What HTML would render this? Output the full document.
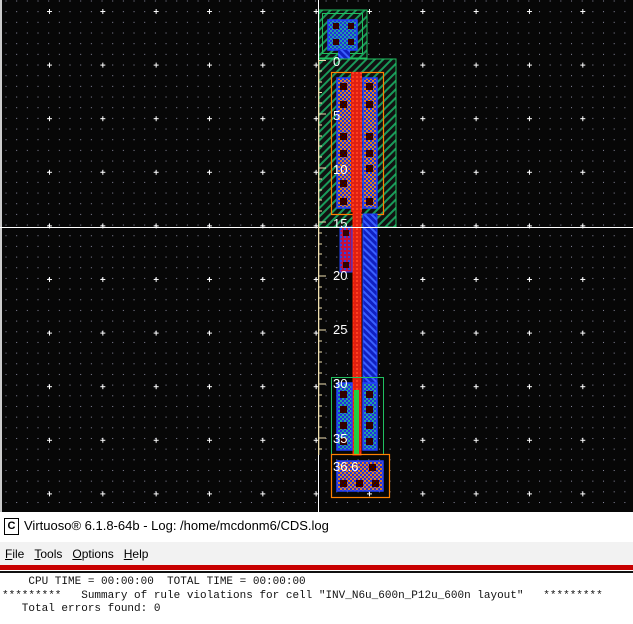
<!DOCTYPE html>
<html><head><style>
body{margin:0;width:633px;height:624px;overflow:hidden;background:#fff;font-family:"Liberation Sans",sans-serif}
#t{position:absolute;left:0;top:512px;width:633px;height:30px;background:#fff;font-size:13px}
#m{position:absolute;left:0;top:542px;width:633px;height:24px;background:#f2f2f2;font-size:12px}
#r{position:absolute;left:0;top:565px;width:633px;height:5px;background:#c80000}
#k{position:absolute;left:0;top:571px;width:633px;height:2px;background:#111}
#log{position:absolute;left:2px;top:576px;font-family:"Liberation Mono",monospace;font-size:11px;line-height:13.5px;white-space:pre;color:#111}
</style></head><body>
<svg width="633" height="512" style="position:absolute;left:0;top:0" xmlns="http://www.w3.org/2000/svg">
<defs>
<pattern id="dots" x="5.5" y="0.5" width="10.67" height="10.67" patternUnits="userSpaceOnUse"><rect width="1" height="1" fill="#8a8aa0"/></pattern>
<pattern id="cross" x="47" y="9" width="53.33" height="53.6" patternUnits="userSpaceOnUse"><rect x="0" y="2" width="5" height="1" fill="#fff"/><rect x="2" y="0" width="1" height="5" fill="#fff"/></pattern>
<pattern id="gh" width="6" height="6" patternUnits="userSpaceOnUse" patternTransform="rotate(45)"><rect width="6" height="6" fill="#111"/><rect width="2" height="6" fill="#1a9a5a"/></pattern>
<pattern id="bh" width="5" height="5" patternUnits="userSpaceOnUse" patternTransform="rotate(-45)"><rect width="5" height="5" fill="#1020c0"/><rect width="2" height="5" fill="#3a60ff"/></pattern>
<pattern id="ob" width="4" height="4" patternUnits="userSpaceOnUse"><rect width="4" height="4" fill="#2030e0"/><rect width="2" height="2" fill="#e08020"/><rect x="2" y="2" width="2" height="2" fill="#e08020"/></pattern>
<pattern id="cb" width="4" height="4" patternUnits="userSpaceOnUse"><rect width="4" height="4" fill="#2030e0"/><rect width="2" height="2" fill="#20a0a0"/><rect x="2" y="2" width="2" height="2" fill="#20a0a0"/></pattern>
<pattern id="rh" width="4" height="4" patternUnits="userSpaceOnUse"><rect width="4" height="4" fill="#e02010"/><rect width="2" height="2" fill="#ff4020"/></pattern>
<pattern id="rb" width="4" height="4" patternUnits="userSpaceOnUse"><rect width="4" height="4" fill="#c01040"/><rect width="2" height="2" fill="#3040e0"/></pattern>
</defs>
<rect width="633" height="512" fill="#070707"/>
<rect width="633" height="512" fill="url(#dots)"/>
<rect width="633" height="512" fill="url(#cross)"/>
<rect x="0" y="0" width="2" height="512" fill="#ccc"/>
<!-- top contact -->
<rect x="319" y="10" width="48" height="48" fill="url(#gh)" stroke="#20c060"/>
<rect x="322.5" y="13.5" width="40" height="40" fill="none" stroke="#20c060"/>
<rect x="328" y="20" width="29" height="30" fill="url(#cb)" stroke="#2040ff" stroke-width="1.5"/>
<rect x="333" y="23" width="6" height="6" fill="#300"/><rect x="348" y="23" width="6" height="6" fill="#300"/>
<rect x="333" y="39" width="6" height="6" fill="#300"/><rect x="348" y="39" width="6" height="6" fill="#300"/>
<rect x="338" y="50" width="12" height="25" fill="url(#bh)"/>
<!-- pmos -->
<rect x="319" y="59" width="77" height="168" fill="url(#gh)" stroke="#20c060"/>
<rect x="331.5" y="72.5" width="52" height="142" fill="none" stroke="#ff8000" stroke-width="1.2"/>
<rect x="337" y="78" width="15" height="130" fill="url(#ob)" stroke="#2040ff" stroke-width="1.5"/>
<rect x="363" y="78" width="14" height="130" fill="url(#ob)" stroke="#2040ff" stroke-width="1.5"/>
<rect x="351" y="72" width="11" height="140" fill="url(#rh)"/>
<g fill="#300">
<rect x="340" y="83" width="7" height="7"/><rect x="340" y="101" width="7" height="7"/><rect x="340" y="133" width="7" height="7"/><rect x="340" y="150" width="7" height="7"/><rect x="340" y="180" width="7" height="7"/><rect x="340" y="198" width="7" height="7"/>
<rect x="366" y="83" width="7" height="7"/><rect x="366" y="101" width="7" height="7"/><rect x="366" y="133" width="7" height="7"/><rect x="366" y="150" width="7" height="7"/><rect x="366" y="165" width="7" height="7"/><rect x="366" y="198" width="7" height="7"/>
</g>
<!-- middle -->
<rect x="340" y="227" width="12" height="45" fill="url(#rb)" stroke="#2040ff"/>
<rect x="343" y="230" width="6" height="6" fill="#300"/><rect x="343" y="262" width="6" height="6" fill="#300"/>
<rect x="363" y="214" width="14" height="172" fill="url(#bh)" stroke="#2040ff"/>
<rect x="353" y="212" width="8" height="243" fill="url(#rh)" stroke="#ff2000"/>
<!-- nmos -->
<rect x="331.5" y="377.5" width="52" height="77" fill="none" stroke="#20c060"/>
<rect x="337" y="383" width="15" height="67" fill="url(#cb)" stroke="#2040ff" stroke-width="1.5"/>
<rect x="363" y="383" width="14" height="67" fill="url(#cb)" stroke="#2040ff" stroke-width="1.5"/>
<rect x="354" y="390" width="5" height="65" fill="#20d040"/>
<g fill="#300"><rect x="340" y="391" width="7" height="7"/><rect x="340" y="406" width="7" height="7"/><rect x="340" y="422" width="7" height="7"/><rect x="340" y="438" width="7" height="7"/>
<rect x="366" y="391" width="7" height="7"/><rect x="366" y="406" width="7" height="7"/><rect x="366" y="422" width="7" height="7"/><rect x="366" y="438" width="7" height="7"/></g>
<!-- bottom contact -->
<rect x="331.5" y="454.5" width="58" height="43" fill="none" stroke="#ff8000" stroke-width="1.2"/>
<rect x="337" y="461" width="46" height="30" fill="url(#ob)" stroke="#2040ff" stroke-width="1.5"/>
<g fill="#300"><rect x="369" y="464" width="7" height="7"/><rect x="340" y="480" width="7" height="7"/><rect x="356" y="480" width="7" height="7"/><rect x="372" y="480" width="7" height="7"/></g>
<!-- crosshair & ruler -->
<rect x="0" y="227" width="633" height="1" fill="#fff"/>
<rect x="318" y="0" width="1" height="60" fill="#fff"/>
<rect x="318" y="455" width="1" height="57" fill="#fff"/>
<rect x="318" y="60" width="1.3" height="395" fill="#f0e0b0"/>
<g stroke="#f0e0b0" stroke-width="1">
<path d="M318 60.5h8M318 71h4M318 82h4M318 92.5h4M318 103h4M318 114h8M318 125h4M318 136h4M318 146h4M318 157h4M318 168h8M318 179h4M318 190h4M318 200h4M318 211h4M318 222h8M318 233h4M318 244h4M318 254h4M318 265h4M318 276h8M318 287h4M318 298h4M318 308h4M318 319h4M318 330h8M318 341h4M318 352h4M318 362h4M318 373h4M318 384h8M318 395h4M318 406h4M318 416h4M318 427h4M318 438h8M318 449h4"/>
</g>
<g fill="#fff" font-family="Liberation Sans,sans-serif" font-size="13">
<text x="333" y="66">0</text><text x="333" y="120">5</text><text x="333" y="174">10</text><text x="333" y="228">15</text><text x="333" y="280">20</text><text x="333" y="334">25</text><text x="333" y="388">30</text><text x="333" y="443">35</text><text x="333" y="471">36.6</text>
</g>
</svg>
<div id="t"><span style="position:absolute;left:4px;top:6px;width:13px;height:15px;border:1px solid #000;font-size:11px;line-height:14px;text-align:center;font-weight:bold">C</span><span style="position:absolute;left:24px;top:6px">Virtuoso® 6.1.8-64b - Log: /home/mcdonm6/CDS.log</span></div>
<div id="m"><span style="position:absolute;left:5px;top:5px"><u>F</u>ile&nbsp;&nbsp;&nbsp;<u>T</u>ools&nbsp;&nbsp;&nbsp;<u>O</u>ptions&nbsp;&nbsp;&nbsp;<u>H</u>elp</span></div>
<div id="r"></div><div id="k"></div>
<div id="log">    CPU TIME = 00:00:00  TOTAL TIME = 00:00:00
*********   Summary of rule violations for cell "INV_N6u_600n_P12u_600n layout"   *********
   Total errors found: 0</div>
</body></html>
